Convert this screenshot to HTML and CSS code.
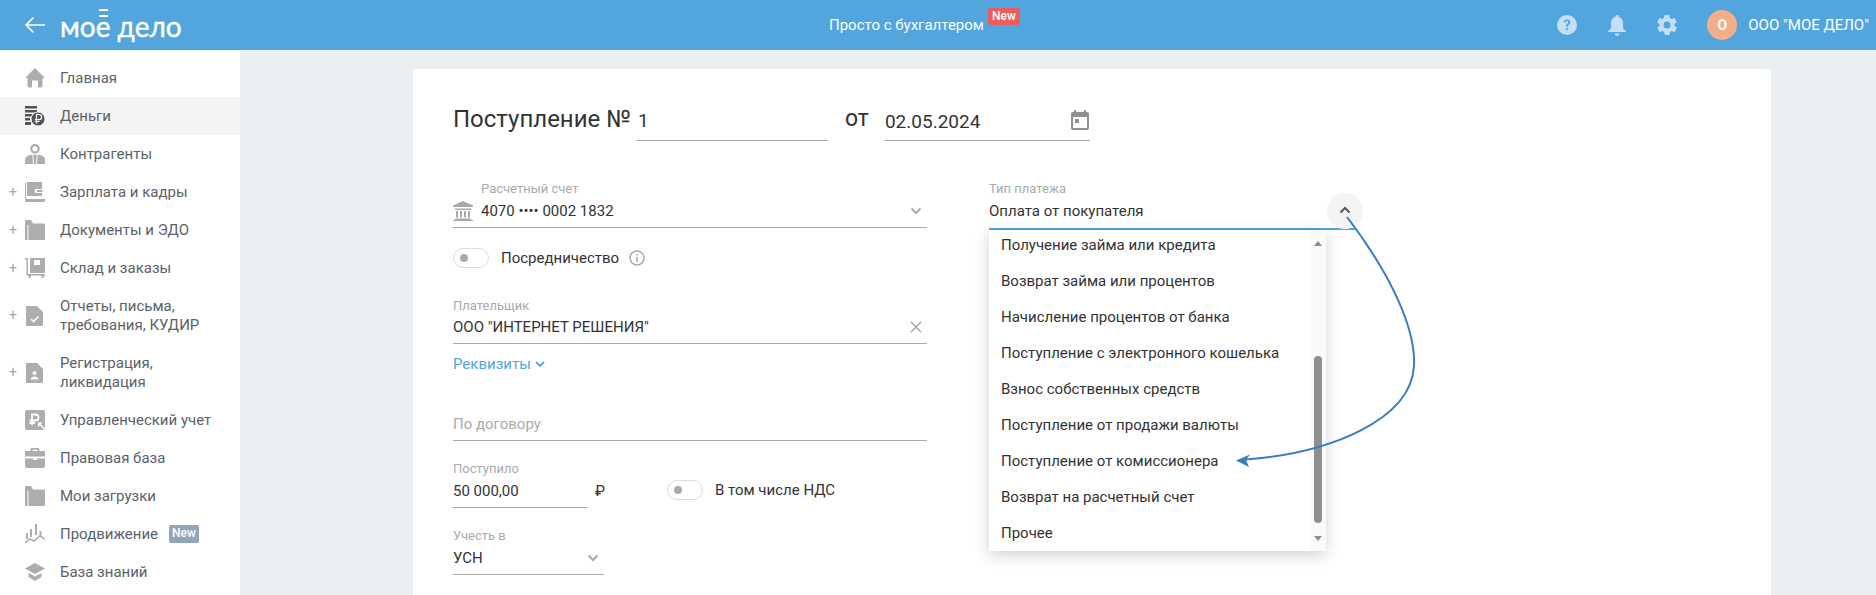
FILE: index.html
```html
<!DOCTYPE html>
<html lang="ru">
<head>
<meta charset="utf-8">
<title>Поступление</title>
<link rel="stylesheet" href="styles.css">
</head>
<body>
<header class="topbar">
  <div class="brand">
    <svg class="back" width="22" height="18" viewBox="0 0 22 18"><path d="M21 9H2M9.500 1.500 2 9l7.500 7.500" fill="none" stroke="#fff" stroke-width="1.600"/></svg>
    <span class="logo">мо<span class="logo-e">е<i></i></span> дело</span>
  </div>
  <div class="promo">Просто с бухгалтером<span class="promo-new">New</span></div>
  <div class="tools">
    <svg class="tool tool-help" width="20" height="20" viewBox="0 0 20 20"><circle cx="10" cy="10" r="10" fill="#c3dff4"/><path d="M6.800 7.600c0-2 1.500-3.200 3.300-3.200 1.900 0 3.200 1.100 3.200 2.800 0 2.400-2.500 2.400-2.500 4.600H8.900c0-3 2.400-3 2.400-4.600 0-.7-.5-1.200-1.200-1.200-.8 0-1.300.6-1.400 1.600z M8.900 13h1.900v2H8.900z" fill="#52a5dd"/></svg>
    <svg class="tool tool-bell" width="18" height="21" viewBox="0 0 18 21"><path d="M9 0c1 0 1.600.7 1.600 1.700C13.500 2.500 15 5 15 8v5.500l3 2.500v1H0v-1l3-2.500V8c0-3 1.500-5.500 4.400-6.300C7.400.7 8 0 9 0zM6.500 18.500h5C11.300 20 10.300 20.800 9 20.800s-2.300-.8-2.500-2.300z" fill="#c3dff4"/></svg>
    <svg class="tool tool-gear" width="24" height="24" viewBox="0 0 24 24"><path d="M19.400 13c.1-.3.100-.7.100-1s0-.7-.1-1l2.100-1.600c.2-.2.300-.4.100-.7l-2-3.400c-.1-.2-.4-.3-.6-.2l-2.500 1c-.5-.4-1.100-.7-1.700-1l-.4-2.600c0-.3-.2-.5-.5-.5h-4c-.2 0-.5.200-.5.500l-.4 2.600c-.6.300-1.200.6-1.700 1l-2.500-1c-.2-.1-.5 0-.6.200l-2 3.400c-.1.300-.1.500.1.700L4.600 11c0 .3-.1.700-.1 1s0 .7.1 1l-2.100 1.600c-.2.200-.3.400-.1.700l2 3.400c.1.200.4.300.6.200l2.500-1c.5.400 1.100.7 1.700 1l.4 2.600c0 .3.300.5.500.5h4c.3 0 .5-.2.500-.5l.4-2.600c.6-.3 1.200-.6 1.700-1l2.500 1c.2.100.5 0 .6-.2l2-3.400c.2-.3.100-.5-.1-.7zM12 15.500a3.500 3.500 0 1 1 0-7 3.500 3.500 0 0 1 0 7z" fill="#c3dff4"/></svg>
    <span class="avatar">О</span>
    <span class="org">ООО "МОЕ ДЕЛО"</span>
  </div>
</header>

<div class="shell">
  <nav class="sidebar">
    <a class="nav-item"><span class="plus"></span>
      <svg class="ico" viewBox="0 0 20 20"><path d="M10 0 20 10h-2.500v7.500c0 1-.7 2-1.800 2H13v-7H7v7H4.300c-1.100 0-1.800-1-1.800-2V10H0z"/></svg>
      <span class="label">Главная</span></a>
    <a class="nav-item active"><span class="plus"></span>
      <svg class="ico" viewBox="0 0 20 20"><path d="M0 0h12v2.500H0zM0 4h12v2.500H0zM0 8h7v2.500H0zM0 12h5v2.500H0zM0 16h6v3H0z"/><circle cx="13" cy="13" r="7" stroke="#f4f4f4" stroke-width="1"/><path d="M11.500 17.500v-9h2.500a2.500 2.500 0 0 1 0 5.200H9.800M9.800 15.500H14.500" fill="none" stroke="#fff" stroke-width="1.200"/></svg>
      <span class="label">Деньги</span></a>
    <a class="nav-item"><span class="plus"></span>
      <svg class="ico" viewBox="0 0 20 20"><path d="M10 0a4.800 4.800 0 1 1 0 9.600A4.800 4.800 0 0 1 10 0zm0 2.200a2.600 2.600 0 1 0 0 5.200 2.600 2.600 0 0 0 0-5.200z"/><path d="M0 20v-4c0-3 3-4.700 6.500-5.200h7c3.500.5 6.500 2.200 6.500 5.200v4z"/><path d="M7.800 11l.7 9M12.200 11l-.7 9" stroke="#fff" stroke-width="1"/></svg>
      <span class="label">Контрагенты</span></a>
    <a class="nav-item"><span class="plus">+</span>
      <svg class="ico" viewBox="0 0 20 20"><path d="M2 0h15v7h-5.500c-1.300 0-2 .8-2 2s.7 2 2 2H17v3H2z M0 1h1v16h19v-7h0V18.500c0 .8-.7 1.500-1.500 1.500h-17C.7 20 0 19.300 0 18.500z M12 8h5.500V10H12z"/></svg>
      <span class="label">Зарплата и кадры</span></a>
    <a class="nav-item"><span class="plus">+</span>
      <svg class="ico" viewBox="0 0 20 20"><path d="M1 0h5l2 3.500h11c.6 0 1 .4 1 1V19c0 .6-.4 1-1 1H3.500V5H2.500v15H1c-.6 0-1-.4-1-1V1c0-.6.4-1 1-1z"/></svg>
      <span class="label">Документы и ЭДО</span></a>
    <a class="nav-item"><span class="plus">+</span>
      <svg class="ico" viewBox="0 0 20 20"><path d="M0 0h3v16h17v1.500h-1v1.200a1.300 1.300 0 0 1-2.600 0v-1.200H6v1.200a1.300 1.300 0 0 1-2.600 0v-1.200H1.500V1.500H0z M5 0h15v15H5zM9 2v5h6V2z"/></svg>
      <span class="label">Склад и заказы</span></a>
    <a class="nav-item tall"><span class="plus">+</span>
      <svg class="ico" viewBox="0 0 20 20"><path d="M2 0h10l6 6v12.500c0 .8-.7 1.500-1.500 1.500h-14.500C1.200 20 1 19.300 1 18.500V1C1 .4 1.400 0 2 0z" /><path d="M6 13l2.500 2.500 5-5" fill="none" stroke="#fff" stroke-width="1.600"/></svg>
      <span class="label">Отчеты, письма,<br>требования, КУДИР</span></a>
    <a class="nav-item tall"><span class="plus">+</span>
      <svg class="ico" viewBox="0 0 20 20"><path d="M2 0h10l6 6v12.500c0 .8-.7 1.500-1.500 1.500h-14.500C1.200 20 1 19.300 1 18.500V1C1 .4 1.400 0 2 0z"/><circle cx="9.500" cy="10" r="2" fill="#fff"/><path d="M5.500 16.500c0-2 2-3 4-3s4 1 4 3z" fill="#fff"/></svg>
      <span class="label">Регистрация,<br>ликвидация</span></a>
    <a class="nav-item"><span class="plus"></span>
      <svg class="ico" viewBox="0 0 20 20"><rect width="20" height="20" rx="2"/><path d="M7 15V4.500h3.500a3 3 0 0 1 0 6H4.500M4.500 13H10" fill="none" stroke="#fff" stroke-width="1.800"/><path d="M13 12.500h4.500L13 17z" fill="#fff"/><path d="M14 13.500l6 6" stroke="#fff" stroke-width="1.400"/></svg>
      <span class="label">Управленческий учет</span></a>
    <a class="nav-item"><span class="plus"></span>
      <svg class="ico" viewBox="0 0 20 20"><path d="M7 0h6c1 0 1.500.7 1.500 1.500V3H20v5.500H0V3h5.500V1.500C5.500.7 6 0 7 0zm.5 1.800V3h5V1.800zM0 10.500h8v1.500h4v-1.500h8v7.500c0 1-.8 2-2 2H2c-1.200 0-2-1-2-2z"/></svg>
      <span class="label">Правовая база</span></a>
    <a class="nav-item"><span class="plus"></span>
      <svg class="ico" viewBox="0 0 20 20"><path d="M1 0h5l2 3.500h11c.6 0 1 .4 1 1V19c0 .6-.4 1-1 1H3.500V5H2.500v15H1c-.6 0-1-.4-1-1V1c0-.6.4-1 1-1z"/></svg>
      <span class="label">Мои загрузки</span></a>
    <a class="nav-item"><span class="plus"></span>
      <svg class="ico" viewBox="0 0 20 20"><path d="M1 9h2v6H1zM5 5h2v8H5zM10 0h2v11h-2zM14.500 7h2v5h-2z"/><path d="M0 19l5-4 4 2 6-5 5 3" fill="none" stroke="#adadad" stroke-width="1.500"/></svg>
      <span class="label">Продвижение</span><span class="nav-new">New</span></a>
    <a class="nav-item"><span class="plus"></span>
      <svg class="ico" viewBox="0 0 20 20"><path d="M10 1 20 6.500 10 12 0 6.500zM3.500 11l6.500 3.500 6.500-3.500v4L10 19l-6.500-4z"/></svg>
      <span class="label">База знаний</span></a>
  </nav>

  <main class="main">
    <section class="card">
      <div class="title-row">
        <h1 class="title">Поступление №</h1>
        <div class="num-input">1</div>
        <span class="from">от</span>
        <div class="date-input">02.05.2024
          <svg width="18" height="20" viewBox="0 0 18 20"><path d="M3 0h2v2h8V0h2v2h1c1.100 0 2 .9 2 2v14c0 1.100-.9 2-2 2H2c-1.100 0-2-.9-2-2V4c0-1.100.9-2 2-2h1zM2 7v11h14V7z M4 9h4v4H4z" fill="#8f8f8f"/></svg>
        </div>
      </div>

      <div class="columns">
        <div class="col-left">
          <div class="account">
            <svg class="bank" width="20" height="20" viewBox="0 0 20 20"><path d="M10 0 20 4.500V6H0V4.500zM2 7.500h16V9H2zM3 10h2v6.500H3zM7 10h2v6.500H7zM11 10h2v6.500h-2zM15 10h2v6.500h-2zM2 17.500h16V19H2zM0 19h20v1H0z" fill="#a9a9a9"/></svg>
            <div class="account-text">
              <div class="cap">Расчетный счет</div>
              <div class="val">4070 •••• 0002 1832</div>
            </div>
            <svg class="chev" width="12" height="8" viewBox="0 0 12 8"><path d="M1.500 1.500 6 6l4.500-4.500" fill="none" stroke="#aaa" stroke-width="2"/></svg>
          </div>

          <div class="switch-row first-switch">
            <span class="switch"><i></i></span>
            <span class="switch-text">Посредничество</span>
            <svg class="info" width="16" height="16" viewBox="0 0 16 16"><circle cx="8" cy="8" r="7" fill="none" stroke="#aaa" stroke-width="1.500"/><path d="M7.200 7h1.600v5H7.200zM7.200 4h1.600v1.600H7.200z" fill="#aaa"/></svg>
          </div>

          <div class="field payer">
            <div class="cap">Плательщик</div>
            <div class="line">
              <div class="val">ООО "ИНТЕРНЕТ РЕШЕНИЯ"</div>
              <svg width="12" height="12" viewBox="0 0 12 12"><path d="M.8.8l10.400 10.400M11.200.8.800 11.200" stroke="#aaa" stroke-width="1.600"/></svg>
            </div>
          </div>

          <a class="details">Реквизиты <svg width="10" height="7" viewBox="0 0 10 7"><path d="M1 1l4 4 4-4" fill="none" stroke="#52a5dd" stroke-width="1.800"/></svg></a>

          <div class="field contract">
            <div class="line"><div class="val placeholder">По договору</div></div>
          </div>

          <div class="sum-row">
            <div class="field sum">
              <div class="cap">Поступило</div>
              <div class="line"><div class="val">50 000,00</div></div>
            </div>
            <span class="rub">₽</span>
            <div class="switch-row vat">
              <span class="switch"><i></i></span>
              <span class="switch-text">В том числе НДС</span>
            </div>
          </div>

          <div class="field tax">
            <div class="cap">Учесть в</div>
            <div class="line">
              <div class="val">УСН</div>
              <svg class="chev" width="12" height="8" viewBox="0 0 12 8"><path d="M1.500 1.500 6 6l4.500-4.500" fill="none" stroke="#aaa" stroke-width="2"/></svg>
            </div>
          </div>
        </div>

        <div class="col-right">
          <div class="field ptype">
            <div class="cap">Тип платежа</div>
            <div class="line active-line">
              <div class="val">Оплата от покупателя</div>
              <span class="round"><svg width="12" height="8" viewBox="0 0 12 8"><path d="M1.500 6.500 6 2l4.500 4.500" fill="none" stroke="#555" stroke-width="2"/></svg></span>
            </div>
          </div>
          <div class="menu">
            <ul class="menu-list">
              <li>Получение займа или кредита</li>
              <li>Возврат займа или процентов</li>
              <li>Начисление процентов от банка</li>
              <li>Поступление с электронного кошелька</li>
              <li>Взнос собственных средств</li>
              <li>Поступление от продажи валюты</li>
              <li>Поступление от комиссионера</li>
              <li>Возврат на расчетный счет</li>
              <li>Прочее</li>
            </ul>
            <div class="scrollbar">
              <span class="arr-up"></span>
              <span class="thumb"></span>
              <span class="arr-down"></span>
            </div>
          </div>
        </div>
      </div>
    </section>
  </main>
</div>

<svg class="pointer" width="1876" height="595" viewBox="0 0 1876 595">
  <path d="M1347 217C1392 276 1416 330 1414 366C1411 420 1330 453 1246 459.500" fill="none" stroke="#3a7dbf" stroke-width="2"/>
  <path d="M1236 460.500 1250 454.500 1246 460 1249 467z" fill="#3a7dbf"/>
</svg>
</body>
</html>
```

FILE: styles.css
```css
* { box-sizing: border-box; }
html, body { margin: 0; height: 100%; overflow: hidden; }
body { font-family: Roboto, "Liberation Sans", sans-serif; color: #333; background: #ebeff2; }

.topbar { height: 50px; background: #52a5dd; display: flex; align-items: center; position: relative; color: #fff; }
.brand { display: flex; align-items: center; padding-left: 24px; }
.back { display: block; }
.logo { font-family: Lato, "Open Sans", sans-serif; font-size: 28px; line-height: 34px; margin-left: 14px; color: #fff; margin-top: 1px; -webkit-text-stroke: .4px #fff; }
.logo-e { position: relative; display: inline-block; }
.logo-e i { position: absolute; left: 3px; right: 2px; top: 0; height: 8px; border-top: 2px solid #fff; border-bottom: 2px solid #fff; }
.promo { position: absolute; left: 829px; top: 16px; font-size: 15px; line-height: 18px; color: #fff; }
.promo-new { position: absolute; left: 159px; top: -8px; background: #eb5e5e; color: #fff; font-size: 12px; font-weight: 500; line-height: 17px; height: 17px; padding: 0 4px; border-radius: 2px; }
.tools { margin-left: auto; display: flex; align-items: center; padding-right: 7px; }
.tool { display: block; }
.tool-help { margin-right: 31px; }
.tool-bell { margin-right: 29px; }
.tool-gear { margin-right: 28px; }
.avatar { width: 30px; height: 30px; border-radius: 50%; background: #f2ae88; color: #fff; font-size: 14px; font-weight: 700; display: flex; align-items: center; justify-content: center; }
.org { font-size: 15px; margin-left: 11px; color: #fff; white-space: nowrap; }

.shell { display: flex; height: 545px; }
.sidebar { width: 240px; flex: none; background: #fff; padding-top: 9px; }
.nav-item { display: flex; align-items: center; height: 38px; color: #5c6268; font-size: 15px; }
.nav-item.tall { height: 57px; line-height: 19px; }
.nav-item.active { background: #f4f4f4; }
.nav-item.active .ico { fill: #4f5357; }
.plus { width: 25px; padding-left: 9px; color: #a6a6a6; font-size: 14px; flex: none; }
.ico { width: 20px; height: 20px; fill: #adadad; flex: none; }
.label { margin-left: 15px; }
.nav-new { margin-left: 11px; background: #93a5bb; color: #fff; font-size: 12px; font-weight: 500; width: 30px; text-align: center; height: 18px; line-height: 17px; border-radius: 2px; }

.main { flex: 1; padding: 19px 105px 0 173px; min-width: 0; }
.card { background: #fff; height: 526px; padding: 0 40px; }

.title-row { display: flex; align-items: flex-end; height: 72px; }
.title { font-size: 24px; font-weight: 400; line-height: 28px; margin: 0 0 8px; color: #333; }
.num-input { width: 191px; margin-left: 6px; height: 33px; border-bottom: 1px solid #aaa; font-size: 19px; line-height: 26px; padding-left: 1px; }
.from { font-size: 23px; line-height: 28px; margin: 0 0 8px; width: 57px; padding-left: 17px; }
.date-input { width: 205px; height: 33px; border-bottom: 1px solid #aaa; font-size: 19px; line-height: 28px; display: flex; justify-content: space-between; }
.date-input svg { margin: 2px 1px 0 0; }

.columns { display: flex; }
.col-left { width: 474px; flex: none; }
.col-right { width: 366px; margin-left: 62px; position: relative; }

.cap { font-size: 13px; line-height: 15px; color: #aaa; }
.val { font-size: 15px; line-height: 18px; color: #333; }
.placeholder { color: #aaa; }

.account { display: flex; align-items: flex-end; height: 48px; margin-top: 39px; border-bottom: 1px solid #aaa; padding-bottom: 5px; }
.account .bank { margin-bottom: 1px; }
.account-text { margin-left: 8px; flex: 1; padding-bottom: 2px; }
.account-text .val { margin-top: 6px; }
.account .chev { margin: 0 5px 7px 0; }

.switch-row { display: flex; align-items: center; }
.first-switch { margin-top: 20px; height: 20px; }
.switch { width: 36px; height: 20px; border: 1px solid #ddd; border-radius: 10px; display: flex; align-items: center; padding-left: 6px; flex: none; background: #fff; }
.switch i { width: 8px; height: 8px; border-radius: 50%; background: #aaa; display: block; }
.switch-text { font-size: 15px; margin-left: 12px; color: #333; }
.info { margin-left: 10px; }

.line { display: flex; align-items: center; justify-content: space-between; border-bottom: 1px solid #aaa; }
.field .val { flex: 1; }
.payer { margin-top: 30px; }
.payer .line { height: 31px; padding-right: 5px; padding-bottom: 3px; }
.details { display: flex; align-items: center; gap: 4px; margin-top: 11px; color: #52a5dd; font-size: 15px; line-height: 18px; }
.contract { margin-top: 28px; }
.contract .line { height: 40px; align-items: flex-end; padding-bottom: 7px; }
.sum-row { display: flex; align-items: flex-end; margin-top: 20px; }
.sum { width: 134px; flex: none; }
.sum .line { height: 32px; padding-bottom: 1px; }
.rub { font-size: 15px; line-height: 18px; margin: 0 0 8px 8px; width: 72px; color: #333; }
.vat { margin-bottom: 8px; }
.tax { margin-top: 20px; width: 151px; }
.tax .line { height: 32px; padding: 0 5px 2px 0; }

.ptype { margin-top: 40px; width: 366px; }
.active-line { height: 34px; border-bottom: 2px solid #52a5dd; padding-bottom: 3px; position: relative; }
.round { position: absolute; right: -8px; top: -3px; width: 36px; height: 36px; border-radius: 50%; background: #f4f4f4; display: flex; align-items: center; justify-content: center; padding-bottom: 2px; }

.menu { position: absolute; left: 0; top: 89px; width: 337px; height: 321px; background: #fff; box-shadow: 0 4px 14px rgba(0,0,0,.18); display: flex; justify-content: space-between; z-index: 2; }
.menu-list { list-style: none; margin: 0; padding: 0 0 0 12px; }
.menu-list li { height: 36px; line-height: 30px; font-size: 15px; color: #333; white-space: nowrap; }
.scrollbar { width: 16px; background: #fafafa; display: flex; flex-direction: column; align-items: center; padding-top: 11px; }
.arr-up, .arr-down { width: 0; height: 0; border-left: 4.500px solid transparent; border-right: 4.500px solid transparent; flex: none; }
.arr-up { border-bottom: 5px solid #8f8f8f; }
.arr-down { border-top: 5px solid #8f8f8f; }
.thumb { width: 8px; height: 167px; background: #8f8f8f; border-radius: 4px; margin: 110px 0 13px; flex: none; }

.pointer { position: absolute; left: 0; top: 0; pointer-events: none; z-index: 5; }
```
